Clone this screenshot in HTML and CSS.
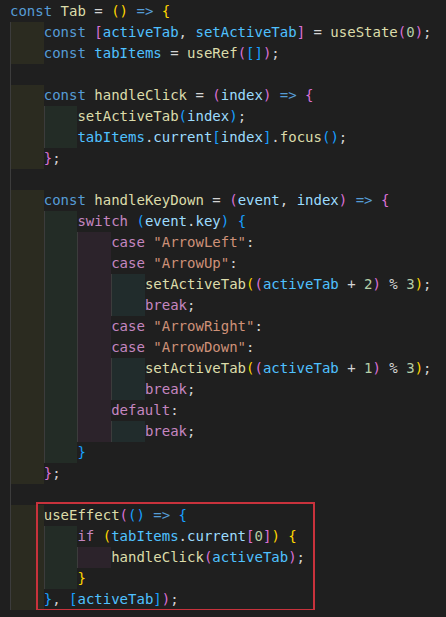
FILE: index.html
```html
<!DOCTYPE html>
<html>
<head>
<meta charset="utf-8">
<link rel="stylesheet" href="styles.css">
</head>
<body>
<div class="code">
<div class="ln"><span class="k">const</span> <span class="f">Tab</span> = <span class="b1">()</span> <span class="k">=&gt;</span> <span class="b1">{</span></div>
<div class="ln"><span class="i i1">    </span><span class="k">const</span> <span class="b2">[</span><span class="n">activeTab</span>, <span class="n">setActiveTab</span><span class="b2">]</span> = <span class="f">useState</span><span class="b2">(</span><span class="m">0</span><span class="b2">)</span>;</div>
<div class="ln"><span class="i i1">    </span><span class="k">const</span> <span class="n">tabItems</span> = <span class="f">useRef</span><span class="b2">(</span><span class="b3">[]</span><span class="b2">)</span>;</div>
<div class="ln"><span class="i g">    </span></div>
<div class="ln"><span class="i i1">    </span><span class="k">const</span> <span class="f">handleClick</span> = <span class="b2">(</span><span class="v">index</span><span class="b2">)</span> <span class="k">=&gt;</span> <span class="b2">{</span></div>
<div class="ln"><span class="i i1">    </span><span class="i i2">    </span><span class="f">setActiveTab</span><span class="b3">(</span><span class="v">index</span><span class="b3">)</span>;</div>
<div class="ln"><span class="i i1">    </span><span class="i i2">    </span><span class="n">tabItems</span>.<span class="v">current</span><span class="b3">[</span><span class="v">index</span><span class="b3">]</span>.<span class="f">focus</span><span class="b3">()</span>;</div>
<div class="ln"><span class="i i1">    </span><span class="b2">}</span>;</div>
<div class="ln"><span class="i g">    </span></div>
<div class="ln"><span class="i i1">    </span><span class="k">const</span> <span class="f">handleKeyDown</span> = <span class="b2">(</span><span class="v">event</span>, <span class="v">index</span><span class="b2">)</span> <span class="k">=&gt;</span> <span class="b2">{</span></div>
<div class="ln"><span class="i i1">    </span><span class="i i2">    </span><span class="c">switch</span> <span class="b3">(</span><span class="v">event</span>.<span class="v">key</span><span class="b3">)</span> <span class="b3">{</span></div>
<div class="ln"><span class="i i1">    </span><span class="i i2">    </span><span class="i i3">    </span><span class="c">case</span> <span class="s">"ArrowLeft"</span>:</div>
<div class="ln"><span class="i i1">    </span><span class="i i2">    </span><span class="i i3">    </span><span class="c">case</span> <span class="s">"ArrowUp"</span>:</div>
<div class="ln"><span class="i i1">    </span><span class="i i2">    </span><span class="i i3">    </span><span class="i i4">    </span><span class="f">setActiveTab</span><span class="b1">(</span><span class="b2">(</span><span class="n">activeTab</span> + <span class="m">2</span><span class="b2">)</span> % <span class="m">3</span><span class="b1">)</span>;</div>
<div class="ln"><span class="i i1">    </span><span class="i i2">    </span><span class="i i3">    </span><span class="i i4">    </span><span class="c">break</span>;</div>
<div class="ln"><span class="i i1">    </span><span class="i i2">    </span><span class="i i3">    </span><span class="c">case</span> <span class="s">"ArrowRight"</span>:</div>
<div class="ln"><span class="i i1">    </span><span class="i i2">    </span><span class="i i3">    </span><span class="c">case</span> <span class="s">"ArrowDown"</span>:</div>
<div class="ln"><span class="i i1">    </span><span class="i i2">    </span><span class="i i3">    </span><span class="i i4">    </span><span class="f">setActiveTab</span><span class="b1">(</span><span class="b2">(</span><span class="n">activeTab</span> + <span class="m">1</span><span class="b2">)</span> % <span class="m">3</span><span class="b1">)</span>;</div>
<div class="ln"><span class="i i1">    </span><span class="i i2">    </span><span class="i i3">    </span><span class="i i4">    </span><span class="c">break</span>;</div>
<div class="ln"><span class="i i1">    </span><span class="i i2">    </span><span class="i i3">    </span><span class="c">default</span>:</div>
<div class="ln"><span class="i i1">    </span><span class="i i2">    </span><span class="i i3">    </span><span class="i i4">    </span><span class="c">break</span>;</div>
<div class="ln"><span class="i i1">    </span><span class="i i2">    </span><span class="b3">}</span></div>
<div class="ln"><span class="i i1">    </span><span class="b2">}</span>;</div>
<div class="ln"><span class="i g">    </span></div>
<div class="hl">
<div class="ln"><span class="i i1">    </span><span class="f">useEffect</span><span class="b2">(</span><span class="b3">()</span> <span class="k">=&gt;</span> <span class="b3">{</span></div>
<div class="ln"><span class="i i1">    </span><span class="i i2">    </span><span class="c">if</span> <span class="b1">(</span><span class="n">tabItems</span>.<span class="v">current</span><span class="b2">[</span><span class="m">0</span><span class="b2">]</span><span class="b1">)</span> <span class="b1">{</span></div>
<div class="ln"><span class="i i1">    </span><span class="i i2">    </span><span class="i i3">    </span><span class="f">handleClick</span><span class="b2">(</span><span class="n">activeTab</span><span class="b2">)</span>;</div>
<div class="ln"><span class="i i1">    </span><span class="i i2">    </span><span class="b1">}</span></div>
<div class="ln"><span class="i i1">    </span><span class="b3">}</span>, <span class="b3">[</span><span class="n">activeTab</span><span class="b3">]</span><span class="b2">)</span>;</div>
</div>
</div>
</body>
</html>
```
FILE: styles.css
```css
html, body {
  margin: 0;
  padding: 0;
  background: #1f1f1f;
}
.code {
  padding: 1px 0 0 10px;
  font-family: "DejaVu Sans Mono", monospace;
  font-size: 14px;
  line-height: 21px;
  color: #d4d4d4;
}
.ln {
  white-space: pre;
  height: 21px;
}
.i {
  display: inline-block;
  height: 21px;
  vertical-align: top;
  background-image: linear-gradient(#3c3c3c, #3c3c3c);
  background-size: 1px 100%;
  background-repeat: no-repeat;
  background-position: left top;
}
.i1 { background-color: #2b2b20; }
.i2 { background-color: #232c26; }
.i3 { background-color: #2c232b; }
.i4 { background-color: #212c2c; }
.g { background-color: transparent; }
.hl {
  position: relative;
}
.hl::after {
  content: "";
  position: absolute;
  left: 26px;
  top: -3px;
  width: 279px;
  height: 109px;
  box-sizing: border-box;
  border: 2px solid #c8323c;
  pointer-events: none;
}
.k { color: #569cd6; }
.c { color: #c586c0; }
.f { color: #dcdcaa; }
.v { color: #9cdcfe; }
.n { color: #4fc1ff; }
.s { color: #ce9178; }
.m { color: #b5cea8; }
.b1 { color: #ffd700; }
.b2 { color: #da70d6; }
.b3 { color: #179fff; }
```
